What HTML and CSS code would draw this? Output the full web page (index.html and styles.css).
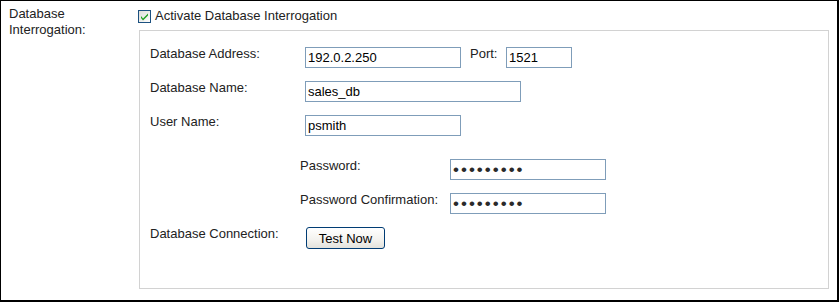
FILE: index.html
```html
<!DOCTYPE html>
<html lang="en">
<head>
  <meta charset="UTF-8" />
  <title>Database Interrogation</title>
  <link rel="stylesheet" href="styles.css">
</head>
<body>
  <div class="panel">
    <div class="section-label">Database<br>Interrogation:</div>
    <div class="section-body">
      <label class="check">
        <svg class="check-box" width="13" height="13" viewBox="0 0 13 13">
          <defs>
            <linearGradient id="cbfill" x1="0" y1="0" x2="1" y2="1">
              <stop offset="0" stop-color="#dcdcd7" />
              <stop offset="1" stop-color="#ffffff" />
            </linearGradient>
          </defs>
          <rect x="0.5" y="0.5" width="12" height="12" fill="url(#cbfill)" stroke="#1c5180" />
          <path d="M3 6 L5 8.5 L10 3.5 L10 5.5 L5 10.5 L3 8 Z" fill="#21a121" />
        </svg>
        <span>Activate Database Interrogation</span>
      </label>

      <div class="box">
        <div class="row">
          <span class="lbl">Database Address:</span>
          <input type="text" class="field field-md" value="192.0.2.250" />
          <span class="lbl-port">Port:</span>
          <input type="text" class="field field-sm" value="1521" />
        </div>
        <div class="row">
          <span class="lbl">Database Name:</span>
          <input type="text" class="field field-lg" value="sales_db" />
        </div>
        <div class="row">
          <span class="lbl">User Name:</span>
          <input type="text" class="field field-md" value="psmith" />
        </div>

        <div class="pw-group">
          <div class="row">
            <span class="lbl">Password:</span>
            <input type="password" class="field field-md pw" value="123456789" />
          </div>
          <div class="row">
            <span class="lbl">Password Confirmation:</span>
            <input type="password" class="field field-md pw" value="123456789" />
          </div>
        </div>

        <div class="row">
          <span class="lbl lbl-btn">Database Connection:</span>
          <button type="button" class="btn">Test Now</button>
        </div>
      </div>
    </div>
  </div>
</body>
</html>
```

FILE: styles.css
```css
body {
  margin: 0;
  font-family: "Liberation Sans", Arial, sans-serif;
  font-size: 13px;
  line-height: 16px;
  color: #222;
  background: #fff;
}
.panel {
  box-sizing: border-box;
  width: 839px;
  height: 302px;
  border: 1px solid #000;
  border-right-width: 2px;
  border-bottom-width: 2px;
  display: grid;
  grid-template-columns: 137px 1fr;
}
.section-label {
  padding: 5px 0 0 8px;
}
.section-body {
  display: flex;
  flex-direction: column;
}
.check {
  display: flex;
  align-items: center;
  gap: 4px;
  margin-top: 7px;
  height: 16px;
}
.check-box { display: block; }
.box {
  box-sizing: border-box;
  width: 690px;
  height: 259px;
  margin: 6px 0 0 1px;
  border: 1px solid #d2d2d2;
  padding: 15px 0 0 10px;
}
.row {
  display: flex;
  align-items: flex-start;
  height: 34px;
}
.lbl {
  width: 155px;
  flex: none;
}
.lbl-btn { width: 156px; }
.lbl-port {
  margin: 0 8px 0 9px;
  width: 28px;
}
.field {
  box-sizing: border-box;
  height: 21px;
  margin: 1px 0 0;
  padding: 0 2px;
  border: 1px solid #7f9db9;
  font-family: "Liberation Sans", Arial, sans-serif;
  font-size: 13px;
  color: #000;
  background: #fff;
  outline: none;
}
.field-md { width: 156px; }
.field-lg { width: 216px; }
.field-sm { width: 66px; }
.pw {
  font-size: 17px;
  letter-spacing: 2px;
  color: #2a2a2a;
}
.pw-group {
  margin: 10px 0 0 150px;
}
.pw-group .lbl { width: 150px; }
.btn {
  box-sizing: border-box;
  width: 79px;
  height: 22px;
  margin-top: 1px;
  padding: 0;
  border: 1px solid #003c74;
  border-radius: 3px;
  background: linear-gradient(#ffffff, #f3f2ee 60%, #e3e2dc);
  font-family: "Liberation Sans", Arial, sans-serif;
  font-size: 13px;
  color: #000;
}
```
